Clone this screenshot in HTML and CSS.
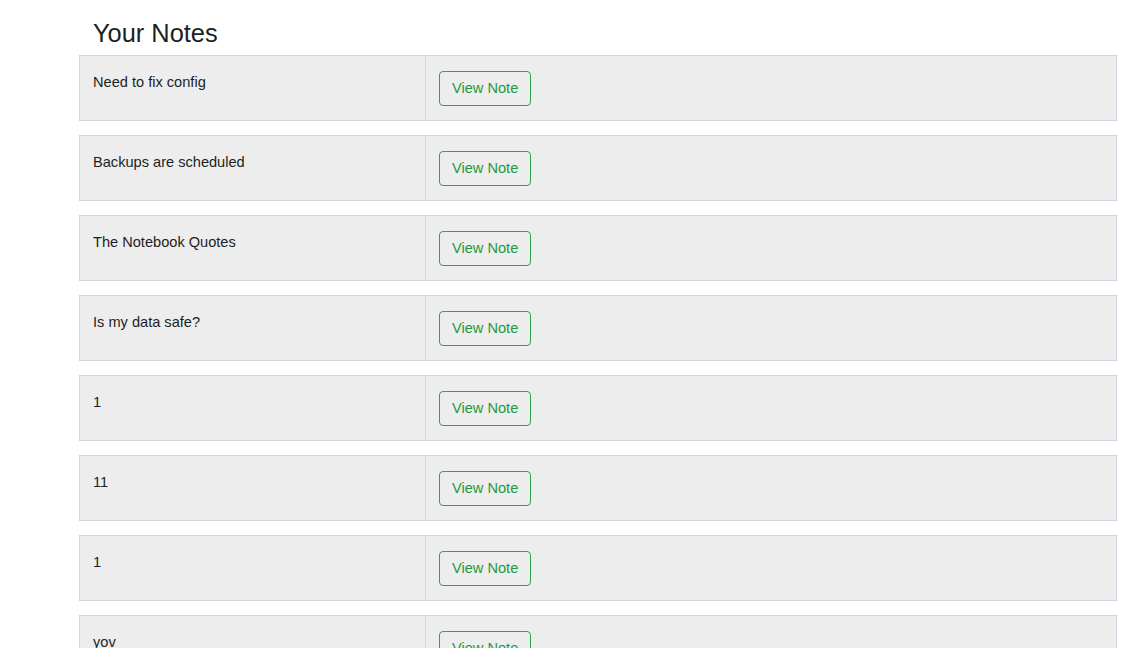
FILE: index.html
```html
<!DOCTYPE html>
<html>
<head>
<meta charset="utf-8">
<title>Your Notes</title>
<link rel="stylesheet" href="styles.css">
</head>
<body>
<div class="page">
  <h3 class="title">Your Notes</h3>
  <div class="notes">
    <div class="note-row"><div class="note-title">Need to fix config</div><div class="note-action"><a class="btn-view" href="#">View Note</a></div></div>
    <div class="note-row"><div class="note-title">Backups are scheduled</div><div class="note-action"><a class="btn-view" href="#">View Note</a></div></div>
    <div class="note-row"><div class="note-title">The Notebook Quotes</div><div class="note-action"><a class="btn-view" href="#">View Note</a></div></div>
    <div class="note-row"><div class="note-title">Is my data safe?</div><div class="note-action"><a class="btn-view" href="#">View Note</a></div></div>
    <div class="note-row"><div class="note-title">1</div><div class="note-action"><a class="btn-view" href="#">View Note</a></div></div>
    <div class="note-row"><div class="note-title">11</div><div class="note-action"><a class="btn-view" href="#">View Note</a></div></div>
    <div class="note-row"><div class="note-title">1</div><div class="note-action"><a class="btn-view" href="#">View Note</a></div></div>
    <div class="note-row"><div class="note-title">yov</div><div class="note-action"><a class="btn-view" href="#">View Note</a></div></div>
  </div>
</div>
</body>
</html>
```
FILE: styles.css
```css
html, body {
  margin: 0;
  padding: 0;
  background: #ffffff;
}
body {
  font-family: "Liberation Sans", Arial, sans-serif;
  font-size: 14.6px;
  line-height: 22px;
  color: #1c1f22;
  overflow: hidden;
}
.page {
  width: 1038px;
  margin-left: 79px;
  padding-top: 17px;
}
.title {
  margin: 0 0 5px 14px;
  font-size: 25.4px;
  font-weight: 400;
  line-height: 33px;
}
.notes {
  display: flex;
  flex-direction: column;
  gap: 14px;
}
.note-row {
  display: flex;
  background: #ededed;
  border: 1px solid #d4d4e2;
}
.note-title {
  width: 346px;
  padding: 15px 13px 0 13px;
  box-sizing: border-box;
  border-right: 1px solid #d4d4e2;
}
.note-action {
  flex: 1;
  padding: 15px 13px 14px 13px;
}
.btn-view {
  display: inline-block;
  vertical-align: top;
  padding: 5px 12px;
  border: 1px solid #2ba548;
  border-radius: 4px;
  color: #229a40;
  text-decoration: none;
  line-height: 23px;
}
```
